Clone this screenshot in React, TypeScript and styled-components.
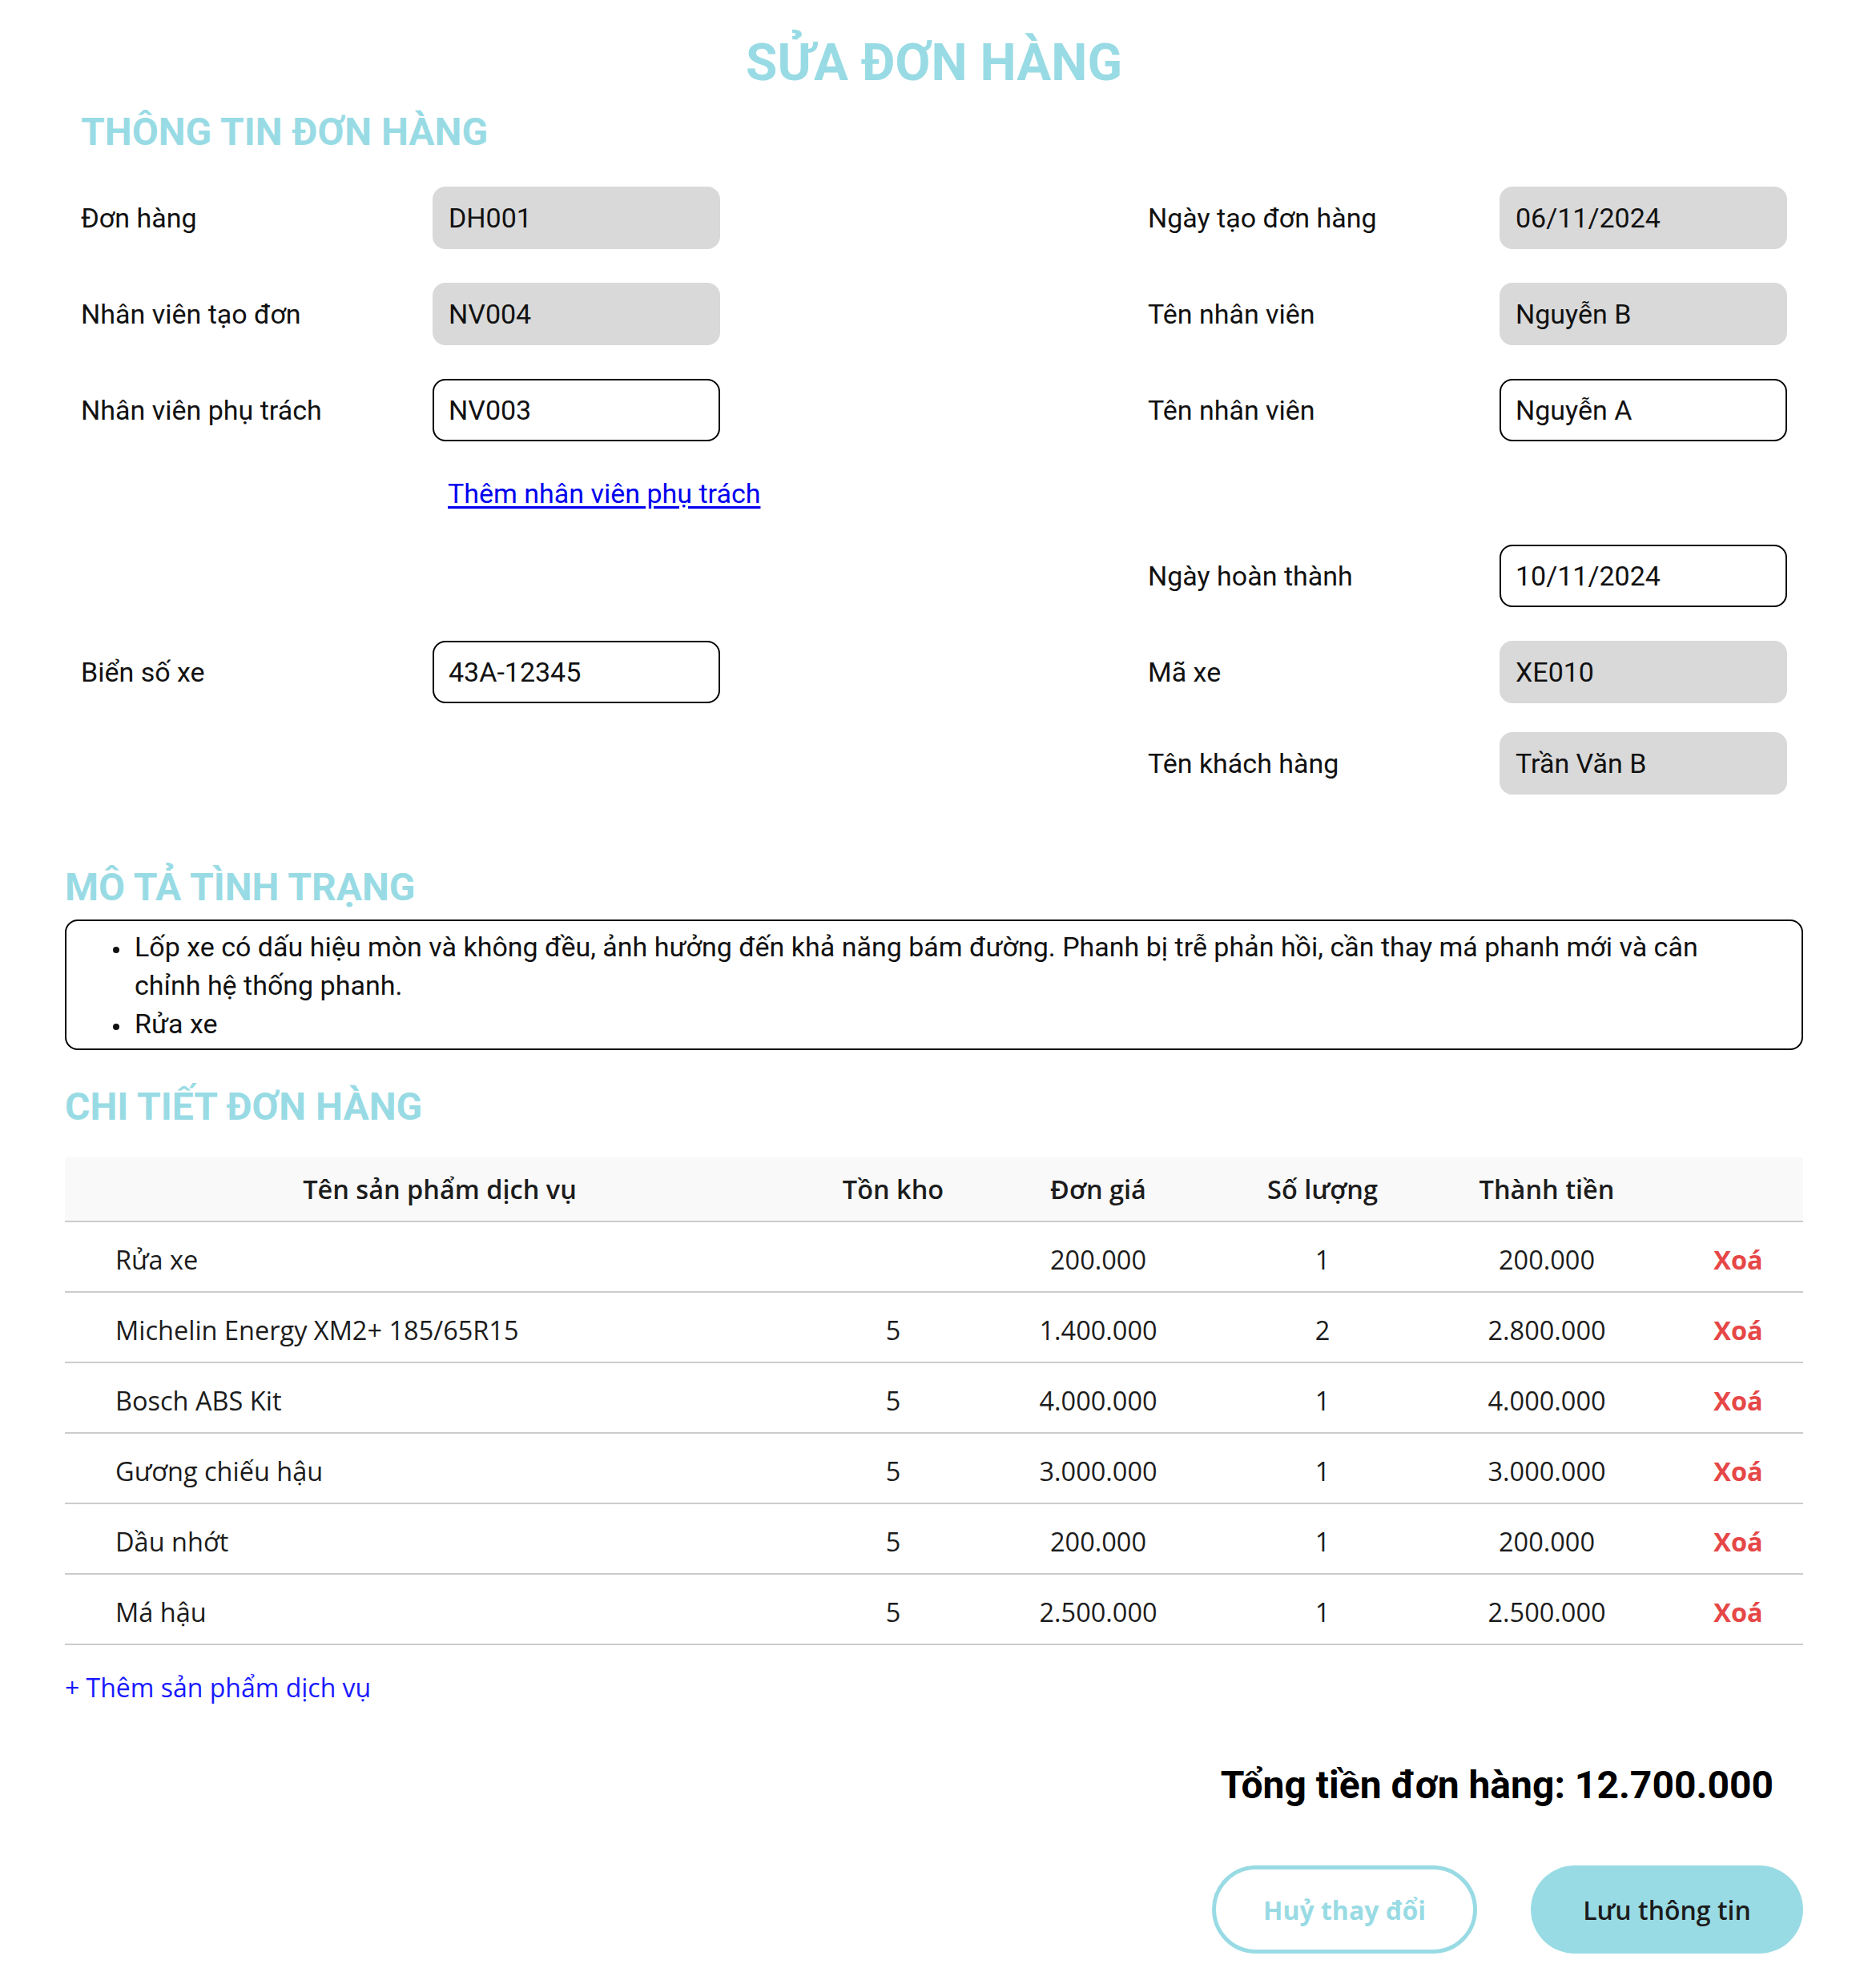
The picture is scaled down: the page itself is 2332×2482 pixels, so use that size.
import React from 'react'
import styled, { createGlobalStyle } from 'styled-components'

const ACCENT = '#99dbe4'
const ROBOTO = '"Roboto", "Noto Sans", "DejaVu Sans", sans-serif'
const OPEN_SANS = '"Open Sans", "Noto Sans", "DejaVu Sans", sans-serif'

const GlobalStyle = createGlobalStyle`
  * {
    box-sizing: border-box;
  }
  body {
    margin: 0;
    background: #fff;
    color: #111;
    font-family: ${ROBOTO};
  }
`

const Page = styled.div`
  padding: 0 81px 42px;
`

const PageTitle = styled.h1`
  margin: 41px 0 0;
  font-family: ${ROBOTO};
  font-size: 64px;
  line-height: 75px;
  font-weight: 700;
  text-align: center;
  color: ${ACCENT};
`

const SectionTitle = styled.h2<{ $top: number }>`
  margin: ${(p) => p.$top}px 0 0;
  font-family: ${ROBOTO};
  font-size: 48px;
  line-height: 56px;
  font-weight: 700;
  color: ${ACCENT};
`

const InfoSection = styled.section`
  padding: 0 20px;
`

const InfoGrid = styled.div`
  display: grid;
  grid-template-columns: 798px 798px;
  justify-content: space-between;
  row-gap: 42px;
  margin-top: 40px;
`

const Field = styled.div<{ $pullUp?: boolean }>`
  display: flex;
  align-items: center;
  min-height: 45px;
  margin-top: ${(p) => (p.$pullUp ? '-6px' : '0')};
`

const Label = styled.span`
  width: 439px;
  flex-shrink: 0;
  font-size: 34px;
  color: #111;
`

const TextBox = styled.input<{ $locked?: boolean }>`
  width: 359px;
  height: 78px;
  padding: 0 18px;
  border: 2px solid ${(p) => (p.$locked ? '#d9d9d9' : '#000')};
  border-radius: 16px;
  background: ${(p) => (p.$locked ? '#d9d9d9' : '#fff')};
  font-family: ${ROBOTO};
  font-size: 34px;
  color: #111;
  outline: none;
`

const StaffLink = styled.a`
  margin-left: 19px;
  white-space: nowrap;
  font-size: 34px;
  color: #0000ee;
  text-decoration: underline;
  text-underline-offset: 4px;
  cursor: pointer;
`

const DescBox = styled.div`
  margin-top: 12px;
  padding: 8px 40px 7px 0;
  border: 2px solid #000;
  border-radius: 16px;
`

const DescList = styled.ul`
  margin: 0;
  padding-left: 81px;
  font-family: ${ROBOTO};
  font-size: 34px;
  line-height: 48px;
  color: #111;

  li {
    padding-left: 4px;
  }

  li::marker {
    font-size: 26px;
  }
`

const Table = styled.table`
  width: 100%;
  margin-top: 35px;
  border-collapse: collapse;
  table-layout: fixed;
  font-family: ${OPEN_SANS};
  font-size: 32.5px;
  color: #1c1c1c;
`

const HeadCell = styled.th`
  height: 80px;
  padding: 0;
  background: #f9f9f9;
  border-bottom: 2px solid #cccccc;
  font-weight: 600;
  text-align: center;
`

const Cell = styled.td<{ $align?: 'left' | 'center' }>`
  height: 88px;
  padding: 6px 0 0 ${(p) => (p.$align === 'left' ? '63px' : '0')};
  border-bottom: 2px solid #cccccc;
  text-align: ${(p) => p.$align ?? 'center'};
`

const RemoveButton = styled.span`
  font-weight: 700;
  color: #e64747;
  cursor: pointer;
`

const AddItem = styled.div`
  margin-top: 31px;
  font-family: ${OPEN_SANS};
  font-size: 32px;
  line-height: 44px;
  color: #1a1aff;
  cursor: pointer;
`

const Total = styled.div`
  margin-top: 72px;
  padding-right: 37px;
  text-align: right;
  font-family: ${ROBOTO};
  font-size: 48px;
  line-height: 56px;
  font-weight: 700;
  color: #000;
`

const Actions = styled.div`
  display: flex;
  justify-content: flex-end;
  gap: 67px;
  margin-top: 72px;
`

const ActionButton = styled.button<{ $variant: 'outline' | 'filled' }>`
  height: 110px;
  width: ${(p) => (p.$variant === 'outline' ? '331px' : '340px')};
  border-radius: 55px;
  border: ${(p) => (p.$variant === 'outline' ? `5px solid ${ACCENT}` : 'none')};
  background: ${(p) => (p.$variant === 'outline' ? '#fff' : ACCENT)};
  color: ${(p) => (p.$variant === 'outline' ? ACCENT : '#1c1c1c')};
  font-family: ${OPEN_SANS};
  font-size: 32px;
  font-weight: ${(p) => (p.$variant === 'outline' ? 700 : 600)};
  cursor: pointer;
`

interface InfoField {
  label: string
  value: string
  locked?: boolean
}

const InfoRow = ({ field, pullUp }: { field: InfoField; pullUp?: boolean }) => (
  <Field $pullUp={pullUp}>
    <Label>{field.label}</Label>
    <TextBox $locked={field.locked} readOnly={field.locked} defaultValue={field.value} />
  </Field>
)

const items = [
  { name: 'Rửa xe', stock: '', price: '200.000', qty: 1, total: '200.000' },
  { name: 'Michelin Energy XM2+ 185/65R15', stock: '5', price: '1.400.000', qty: 2, total: '2.800.000' },
  { name: 'Bosch ABS Kit', stock: '5', price: '4.000.000', qty: 1, total: '4.000.000' },
  { name: 'Gương chiếu hậu', stock: '5', price: '3.000.000', qty: 1, total: '3.000.000' },
  { name: 'Dầu nhớt', stock: '5', price: '200.000', qty: 1, total: '200.000' },
  { name: 'Má hậu', stock: '5', price: '2.500.000', qty: 1, total: '2.500.000' },
]

export default function App() {
  return (
    <>
      <GlobalStyle />
      <Page>
        <PageTitle>SỬA ĐƠN HÀNG</PageTitle>

        <InfoSection>
          <SectionTitle $top={21}>THÔNG TIN ĐƠN HÀNG</SectionTitle>
          <InfoGrid>
            <InfoRow field={{ label: 'Đơn hàng', value: 'DH001', locked: true }} />
            <InfoRow field={{ label: 'Ngày tạo đơn hàng', value: '06/11/2024', locked: true }} />

            <InfoRow field={{ label: 'Nhân viên tạo đơn', value: 'NV004', locked: true }} />
            <InfoRow field={{ label: 'Tên nhân viên', value: 'Nguyễn B', locked: true }} />

            <InfoRow field={{ label: 'Nhân viên phụ trách', value: 'NV003' }} />
            <InfoRow field={{ label: 'Tên nhân viên', value: 'Nguyễn A' }} />

            <Field>
              <Label />
              <StaffLink>Thêm nhân viên phụ trách</StaffLink>
            </Field>
            <div />

            <div />
            <InfoRow field={{ label: 'Ngày hoàn thành', value: '10/11/2024' }} />

            <InfoRow field={{ label: 'Biển số xe', value: '43A-12345' }} />
            <InfoRow field={{ label: 'Mã xe', value: 'XE010', locked: true }} />

            <div />
            <InfoRow pullUp field={{ label: 'Tên khách hàng', value: 'Trần Văn B', locked: true }} />
          </InfoGrid>
        </InfoSection>

        <SectionTitle $top={88}>MÔ TẢ TÌNH TRẠNG</SectionTitle>
        <DescBox>
          <DescList>
            <li>
              Lốp xe có dấu hiệu mòn và không đều, ảnh hưởng đến khả năng bám đường. Phanh bị trễ
              phản hồi, cần thay má phanh mới và cân chỉnh hệ thống phanh.
            </li>
            <li>Rửa xe</li>
          </DescList>
        </DescBox>

        <SectionTitle $top={43}>CHI TIẾT ĐƠN HÀNG</SectionTitle>
        <Table>
          <colgroup>
            <col style={{ width: 936 }} />
            <col style={{ width: 196 }} />
            <col style={{ width: 316 }} />
            <col style={{ width: 244 }} />
            <col style={{ width: 316 }} />
            <col style={{ width: 162 }} />
          </colgroup>
          <thead>
            <tr>
              <HeadCell>Tên sản phẩm dịch vụ</HeadCell>
              <HeadCell>Tồn kho</HeadCell>
              <HeadCell>Đơn giá</HeadCell>
              <HeadCell>Số lượng</HeadCell>
              <HeadCell>Thành tiền</HeadCell>
              <HeadCell />
            </tr>
          </thead>
          <tbody>
            {items.map((item) => (
              <tr key={item.name}>
                <Cell $align="left">{item.name}</Cell>
                <Cell>{item.stock}</Cell>
                <Cell>{item.price}</Cell>
                <Cell>{item.qty}</Cell>
                <Cell>{item.total}</Cell>
                <Cell>
                  <RemoveButton>Xoá</RemoveButton>
                </Cell>
              </tr>
            ))}
          </tbody>
        </Table>

        <AddItem>+ Thêm sản phẩm dịch vụ</AddItem>

        <Total>Tổng tiền đơn hàng: 12.700.000</Total>

        <Actions>
          <ActionButton $variant="outline">Huỷ thay đổi</ActionButton>
          <ActionButton $variant="filled">Lưu thông tin</ActionButton>
        </Actions>
      </Page>
    </>
  )
}
